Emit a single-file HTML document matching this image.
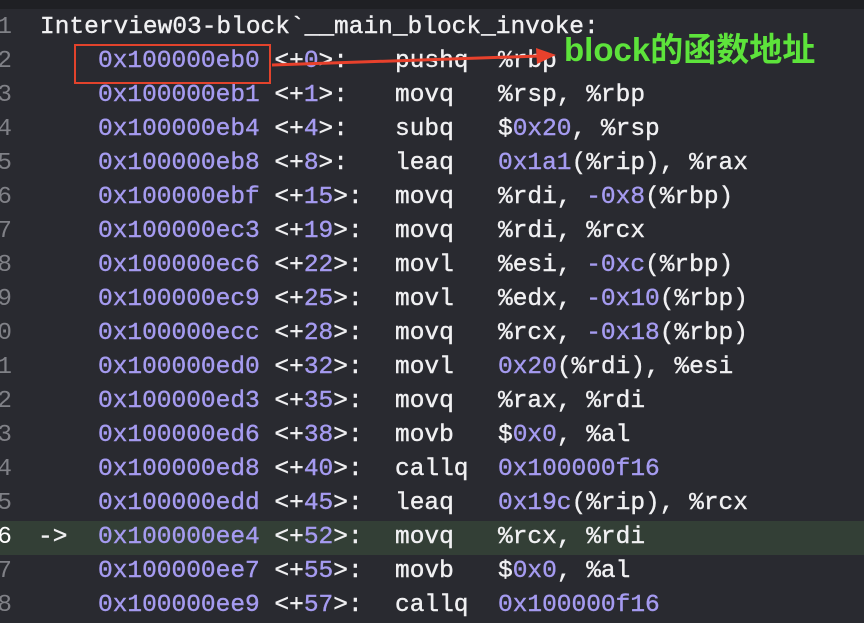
<!DOCTYPE html>
<html><head><meta charset="utf-8"><style>
html,body{margin:0;padding:0}
body{width:864px;height:604px;background:#292a30;position:relative;overflow:hidden;font-family:"Liberation Mono",monospace;font-size:24.5px;color:#f0f0f2;-webkit-text-stroke:0.4px}
.top{position:absolute;left:0;top:0;width:864px;height:9px;background:#1f2024}
.r{position:absolute;left:0;width:864px;height:34px;line-height:34px;white-space:pre}
.r span{position:absolute;top:0}
.n{right:852px;color:#808187;text-align:right;-webkit-text-stroke:0}
i{font-style:normal;color:#a59bf0}
.hl{background:#333f36}
</style></head><body>
<div class="top"></div>
<div class="r" style="top:11px"><span class="n">1</span><span style="left:40px">Interview03-block`__main_block_invoke:</span></div>
<div class="r" style="top:45px"><span class="n">2</span><span style="left:98px"><i>0x100000eb0</i> &lt;+<i>0</i>&gt;:</span><span style="left:395px">pushq</span><span style="left:498px">%rbp</span></div>
<div class="r" style="top:79px"><span class="n">3</span><span style="left:98px"><i>0x100000eb1</i> &lt;+<i>1</i>&gt;:</span><span style="left:395px">movq</span><span style="left:498px">%rsp, %rbp</span></div>
<div class="r" style="top:113px"><span class="n">4</span><span style="left:98px"><i>0x100000eb4</i> &lt;+<i>4</i>&gt;:</span><span style="left:395px">subq</span><span style="left:498px">$<i>0x20</i>, %rsp</span></div>
<div class="r" style="top:147px"><span class="n">5</span><span style="left:98px"><i>0x100000eb8</i> &lt;+<i>8</i>&gt;:</span><span style="left:395px">leaq</span><span style="left:498px"><i>0x1a1</i>(%rip), %rax</span></div>
<div class="r" style="top:181px"><span class="n">6</span><span style="left:98px"><i>0x100000ebf</i> &lt;+<i>15</i>&gt;:</span><span style="left:395px">movq</span><span style="left:498px">%rdi, <i>-0x8</i>(%rbp)</span></div>
<div class="r" style="top:215px"><span class="n">7</span><span style="left:98px"><i>0x100000ec3</i> &lt;+<i>19</i>&gt;:</span><span style="left:395px">movq</span><span style="left:498px">%rdi, %rcx</span></div>
<div class="r" style="top:249px"><span class="n">8</span><span style="left:98px"><i>0x100000ec6</i> &lt;+<i>22</i>&gt;:</span><span style="left:395px">movl</span><span style="left:498px">%esi, <i>-0xc</i>(%rbp)</span></div>
<div class="r" style="top:283px"><span class="n">9</span><span style="left:98px"><i>0x100000ec9</i> &lt;+<i>25</i>&gt;:</span><span style="left:395px">movl</span><span style="left:498px">%edx, <i>-0x10</i>(%rbp)</span></div>
<div class="r" style="top:317px"><span class="n">10</span><span style="left:98px"><i>0x100000ecc</i> &lt;+<i>28</i>&gt;:</span><span style="left:395px">movq</span><span style="left:498px">%rcx, <i>-0x18</i>(%rbp)</span></div>
<div class="r" style="top:351px"><span class="n">11</span><span style="left:98px"><i>0x100000ed0</i> &lt;+<i>32</i>&gt;:</span><span style="left:395px">movl</span><span style="left:498px"><i>0x20</i>(%rdi), %esi</span></div>
<div class="r" style="top:385px"><span class="n">12</span><span style="left:98px"><i>0x100000ed3</i> &lt;+<i>35</i>&gt;:</span><span style="left:395px">movq</span><span style="left:498px">%rax, %rdi</span></div>
<div class="r" style="top:419px"><span class="n">13</span><span style="left:98px"><i>0x100000ed6</i> &lt;+<i>38</i>&gt;:</span><span style="left:395px">movb</span><span style="left:498px">$<i>0x0</i>, %al</span></div>
<div class="r" style="top:453px"><span class="n">14</span><span style="left:98px"><i>0x100000ed8</i> &lt;+<i>40</i>&gt;:</span><span style="left:395px">callq</span><span style="left:498px"><i>0x100000f16</i></span></div>
<div class="r" style="top:487px"><span class="n">15</span><span style="left:98px"><i>0x100000edd</i> &lt;+<i>45</i>&gt;:</span><span style="left:395px">leaq</span><span style="left:498px"><i>0x19c</i>(%rip), %rcx</span></div>
<div class="r hl" style="top:521px"><span class="n" style="color:#fff">16</span><span style="left:38px">-&gt;</span><span style="left:98px"><i>0x100000ee4</i> &lt;+<i>52</i>&gt;:</span><span style="left:395px">movq</span><span style="left:498px">%rcx, %rdi</span></div>
<div class="r" style="top:555px"><span class="n">17</span><span style="left:98px"><i>0x100000ee7</i> &lt;+<i>55</i>&gt;:</span><span style="left:395px">movb</span><span style="left:498px">$<i>0x0</i>, %al</span></div>
<div class="r" style="top:589px"><span class="n">18</span><span style="left:98px"><i>0x100000ee9</i> &lt;+<i>57</i>&gt;:</span><span style="left:395px">callq</span><span style="left:498px"><i>0x100000f16</i></span></div>
<div style="position:absolute;left:74px;top:44px;width:193px;height:36px;border:2px solid #e2432c"></div>
<svg width="864" height="604" style="position:absolute;left:0;top:0">
<line x1="272" y1="65" x2="540" y2="56" stroke="#e8412c" stroke-width="3"/>
<polygon points="556,55 536,48 537,64" fill="#e8412c"/>
</svg>
<div style="position:absolute;left:564px;top:29px;font-family:'Liberation Sans','Noto Sans CJK SC',sans-serif;font-weight:bold;font-size:33px;line-height:42px;color:#5de33b;white-space:nowrap;-webkit-text-stroke:0">block的函数地址</div>
</body></html>
